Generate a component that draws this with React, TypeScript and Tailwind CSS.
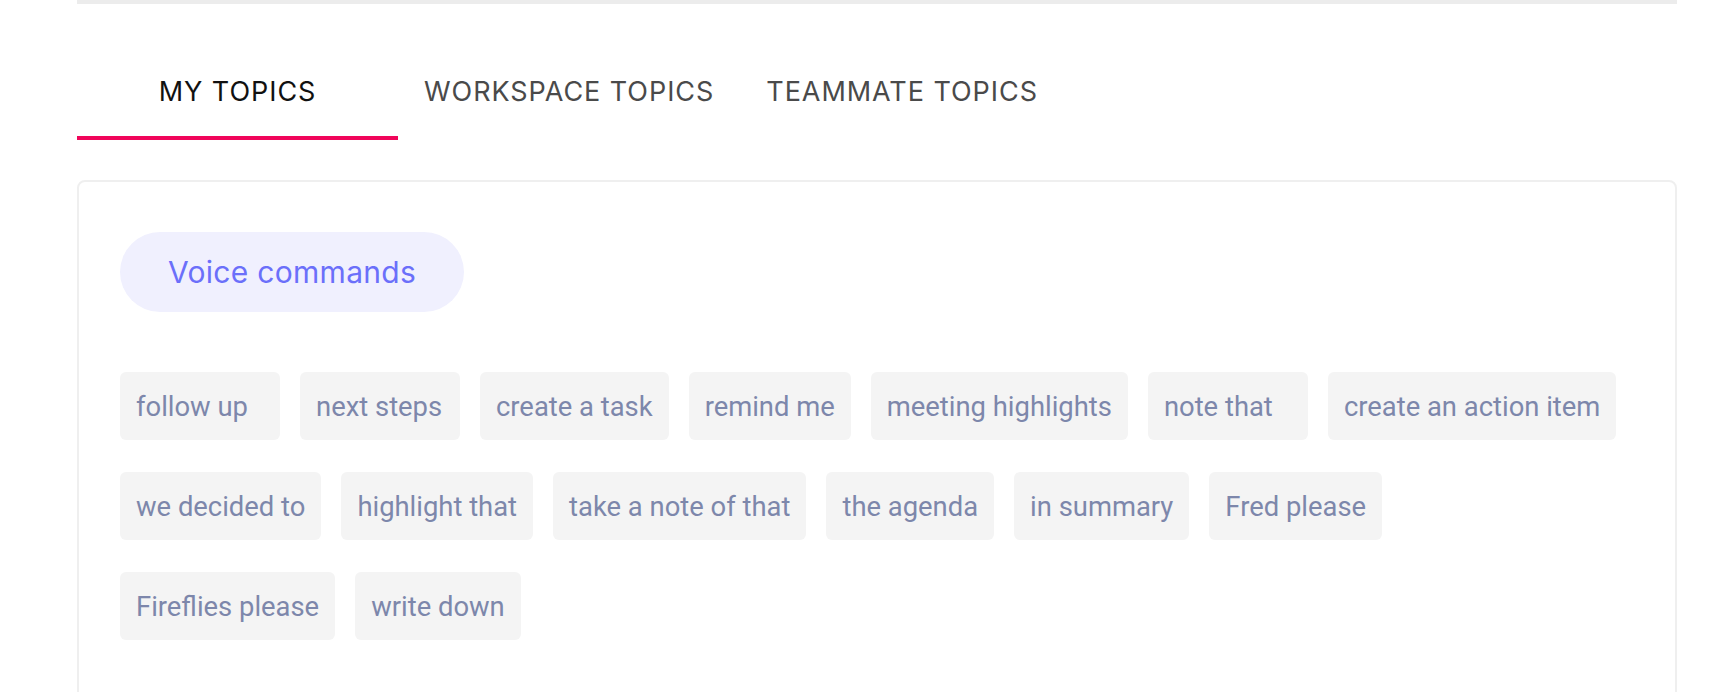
import { useState } from 'react';

const rows: string[][] = [
  ['follow up', 'next steps', 'create a task', 'remind me', 'meeting highlights', 'note that', 'create an action item'],
  ['we decided to', 'highlight that', 'take a note of that', 'the agenda', 'in summary', 'Fred please'],
  ['Fireflies please', 'write down'],
];

const tabs = ['My topics', 'Workspace topics', 'Teammate topics'];

export default function App() {
  const [active, setActive] = useState(0);

  return (
    <div className="min-h-screen bg-white">
      <div className="ml-[77px] w-[1600px]">
        <div className="h-[4px] bg-[#ececec]"></div>

        <div className="flex mt-[56px]">
          {tabs.map((t, i) => (
            <button
              key={t}
              onClick={() => setActive(i)}
              className={`h-[80px] flex flex-col items-center justify-start uppercase font-['Inter',sans-serif] text-[27px] tracking-[0.035em] ${i === 0 ? 'w-[321px]' : 'px-[26px]'} ${active === i ? 'text-[#111111]' : 'text-[#4a4a4a]'}`}
            >
              <span className="leading-[36px] mt-[14px]">{t}</span>
              <span className={`mt-auto h-[4px] w-full ${active === i ? 'bg-[#f0055a]' : 'bg-transparent'}`}></span>
            </button>
          ))}
        </div>

        <div className="mt-[40px] border-2 border-[#efefef] rounded-[8px] pl-[41px] pr-[41px] pt-[50px] pb-[80px]">
          <div className="inline-flex items-center h-[80px] w-[344px] pl-[48px] rounded-full bg-[#f0f0fe] text-[#6b6ffa] font-['Inter',sans-serif] text-[30px] tracking-[0.01em]">
            Voice commands
          </div>

          <div className="mt-[60px] flex flex-col gap-y-[32px]">
            {rows.map((row, r) => (
              <div key={r} className="flex gap-x-[20px]">
                {row.map(c => (
                  <span
                    key={c}
                    className="h-[68px] min-w-[160px] px-[16px] pt-[4px] flex items-center rounded-[6px] bg-[#f4f4f4] text-[#7d87ab] font-['Roboto',sans-serif] text-[27.4px]"
                  >
                    {c}
                  </span>
                ))}
              </div>
            ))}
          </div>
        </div>
      </div>
    </div>
  );
}
